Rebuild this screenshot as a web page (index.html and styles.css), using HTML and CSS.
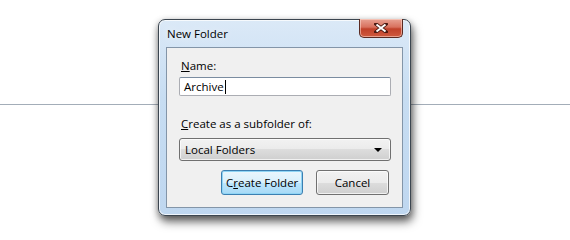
FILE: index.html
```html
<!DOCTYPE html>
<html lang="en">

<head>
    <meta charset="UTF-8">
    <title>New Folder</title>
    <link rel="stylesheet" href="styles.css">
</head>

<body>
    <div class="window">
        <div class="titlebar">
            <span class="title">New Folder</span>
            <button class="close" type="button">
                <svg width="14" height="10" viewBox="0 0 14 10">
                    <path d="M2 1 L12 9 M12 1 L2 9" stroke="#4a1a12" stroke-width="3.6" stroke-linecap="square"/>
                    <path d="M2.5 1.5 L11.5 8.5 M11.5 1.5 L2.5 8.5" stroke="#fff" stroke-width="2"/>
                </svg>
            </button>
        </div>

        <form class="client">
            <label class="field-label" for="name"><u>N</u>ame:</label>
            <div class="textbox" id="name">Archive<span class="caret"></span></div>

            <label class="field-label second"><u>C</u>reate as a subfolder of:</label>
            <div class="dropdown">
                <span>Local Folders</span>
                <span class="arrow"></span>
            </div>

            <div class="buttons">
                <button type="button" class="btn default">C<u>r</u>eate Folder</button>
                <button type="button" class="btn">Cancel</button>
            </div>
        </form>
    </div>
</body>

</html>
```

FILE: styles.css
```css
body {
    margin: 0;
    height: 240px;
    box-sizing: border-box;
    overflow: hidden;
    font-family: 'Open Sans', 'Noto Sans', sans-serif;
    font-size: 11.5px;
    color: #000;
    background: linear-gradient(to bottom, transparent 104px, #a3adb8 104px, #a3adb8 105px, transparent 105px), #fff;
    padding-top: 19px;
}

.window {
    margin-left: 158px;
    width: 253px;
    height: 197px;
    box-sizing: border-box;
    border: 1px solid #3c4650;
    border-radius: 7px;
    padding: 0 7px 7px 7px;
    background: linear-gradient(to bottom, #dbe9f7 0%, #c7ddf2 40%, #bfd7f0 100%);
    box-shadow: inset 0 0 0 1px rgba(255, 255, 255, 0.75), 2px 6px 10px rgba(0, 0, 0, 0.55), 0 2px 6px rgba(0, 0, 0, 0.3);
    display: flex;
    flex-direction: column;
}

.titlebar {
    height: 27px;
    display: flex;
    align-items: flex-start;
    justify-content: space-between;
}

.title {
    margin-top: 6px;
    margin-left: 1px;
    color: #000;
    text-shadow: 0 0 8px #fff;
}

.close {
    width: 44px;
    height: 19px;
    margin-top: -1px;
    margin-right: 0;
    padding: 0;
    border: 1px solid #5a2a22;
    border-top: none;
    border-radius: 0 0 5px 5px;
    background: linear-gradient(to bottom, #e8a293 0%, #d8715e 45%, #c0412a 55%, #cf5a3f 100%);
    box-shadow: inset 0 0 0 1px rgba(255, 220, 210, 0.55);
    display: flex;
    align-items: center;
    justify-content: center;
}

.client {
    flex: 1;
    margin: 0;
    border: 1px solid #8395a8;
    background: #f0f0f0;
    padding: 10px 11px 0 12px;
    display: flex;
    flex-direction: column;
}

.field-label {
    margin-left: 2px;
    line-height: 16px;
}

.field-label.second {
    margin-top: 20px;
}

.textbox {
    margin-top: 3px;
    height: 19px;
    box-sizing: border-box;
    border: 1px solid #abadb3;
    border-top-color: #7a8ca0;
    border-radius: 2px;
    background: #fff;
    padding: 0 4px;
    line-height: 17px;
    display: flex;
    align-items: center;
}

.caret {
    display: inline-block;
    width: 1px;
    height: 14px;
    background: #000;
    margin-left: 1px;
}

.dropdown {
    margin-top: 6px;
    height: 23px;
    box-sizing: border-box;
    border: 1px solid #707070;
    border-radius: 3px;
    background: linear-gradient(to bottom, #f2f2f2 0%, #ebebeb 50%, #dddddd 50%, #cfcfcf 100%);
    box-shadow: inset 0 0 0 1px rgba(255, 255, 255, 0.7);
    padding: 0 8px 0 5px;
    display: flex;
    align-items: center;
    justify-content: space-between;
}

.arrow {
    width: 0;
    height: 0;
    border-left: 4px solid transparent;
    border-right: 4px solid transparent;
    border-top: 4px solid #000;
}

.buttons {
    margin-top: 9px;
    display: flex;
    justify-content: flex-end;
    gap: 13px;
    padding-right: 2px;
}

.btn {
    height: 25px;
    min-width: 73px;
    padding: 0 4px;
    white-space: nowrap;
    font-family: inherit;
    font-size: 11.5px;
    color: #000;
    border: 1px solid #707070;
    border-radius: 3px;
    background: linear-gradient(to bottom, #f2f2f2 0%, #ebebeb 50%, #dddddd 50%, #cfcfcf 100%);
    box-shadow: inset 0 0 0 1px rgba(255, 255, 255, 0.7);
}

.btn.default {
    width: 82px;
    border-color: #3c7fb1;
    background: linear-gradient(to bottom, #eaf6fd 0%, #d9f0fc 50%, #bee6fd 50%, #a7d9f5 100%);
    box-shadow: inset 0 0 0 1px #90d5f5;
}
```
